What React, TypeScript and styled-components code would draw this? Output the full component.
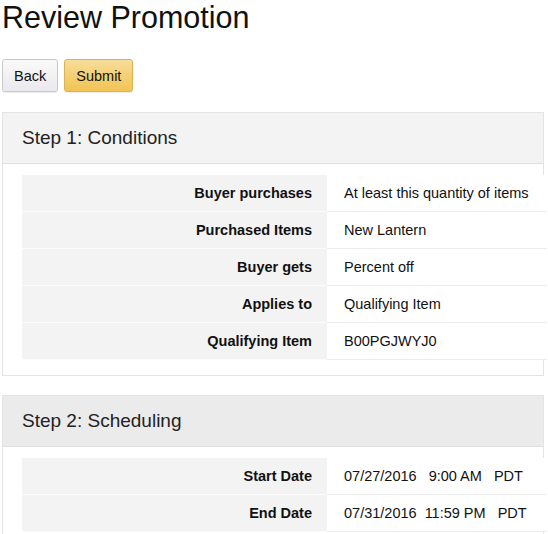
import React from "react";
import styled, { createGlobalStyle } from "styled-components";

const Global = createGlobalStyle`
  html, body { margin: 0; padding: 0; background: #ffffff; }
  body { font-family: Arial, "Liberation Sans", sans-serif; color: #111; }
`;

const Page = styled.div`
  width: 548px;
  height: 534px;
  overflow: hidden;
  padding-left: 2px;
  box-sizing: border-box;
`;

const Title = styled.h1`
  margin: 0;
  font-size: 30.5px;
  line-height: 34px;
  font-weight: normal;
  color: #111;
`;

const ButtonRow = styled.div`
  display: flex;
  gap: 6px;
  margin-top: 25px;
`;

const Button = styled.button<{ $primary?: boolean }>`
  height: 33px;
  padding: 0 11px;
  font-family: Arial, "Liberation Sans", sans-serif;
  font-size: 14.5px;
  color: #111;
  border-radius: 3px;
  border: 1px solid ${(p) => (p.$primary ? "#d9b25a" : "#c9c9c9")};
  background: ${(p) =>
    p.$primary
      ? "linear-gradient(to bottom, #f8dd99, #f1c352)"
      : "linear-gradient(to bottom, #fafafa, #e9e9ee)"};
  box-shadow: 0 1px 1px rgba(0, 0, 0, 0.08);
`;

const Section = styled.section<{ $top: number }>`
  margin-top: ${(p) => p.$top}px;
  width: 542px;
  border: 1px solid #e4e4e4;
  box-sizing: border-box;
  padding-bottom: 15px;
`;

const SectionHeader = styled.div<{ $shade: string }>`
  height: 50px;
  display: flex;
  align-items: center;
  padding-left: 19px;
  background: ${(p) => p.$shade};
  border-bottom: 1px solid #dedede;
  font-size: 19px;
  color: #222;
`;

const Table = styled.div`
  margin: 11px 0 0 19px;
  display: grid;
  grid-template-columns: 305px 1fr;
  margin-right: -4px;
`;

const Label = styled.div`
  height: 37px;
  display: flex;
  align-items: center;
  justify-content: flex-end;
  padding-right: 15px;
  background: #f3f3f3;
  border-bottom: 1px solid #fbfbfb;
  box-sizing: border-box;
  font-size: 14.5px;
  font-weight: bold;
  color: #111;
`;

const Value = styled.div`
  height: 37px;
  display: flex;
  align-items: center;
  padding-left: 17px;
  background: #ffffff;
  border-bottom: 1px solid #ececec;
  box-sizing: border-box;
  font-size: 14.5px;
  color: #111;
  white-space: pre;
`;

const step1: [string, string][] = [
  ["Buyer purchases", "At least this quantity of items"],
  ["Purchased Items", "New Lantern"],
  ["Buyer gets", "Percent off"],
  ["Applies to", "Qualifying Item"],
  ["Qualifying Item", "B00PGJWYJ0"],
];

const step2: [string, string][] = [
  ["Start Date", "07/27/2016   9:00 AM   PDT"],
  ["End Date", "07/31/2016  11:59 PM   PDT"],
];

function Rows({ rows }: { rows: [string, string][] }) {
  return (
    <Table>
      {rows.map(([l, v]) => (
        <React.Fragment key={l}>
          <Label>{l}</Label>
          <Value>{v}</Value>
        </React.Fragment>
      ))}
    </Table>
  );
}

export default function App() {
  return (
    <>
      <Global />
      <Page>
        <Title>Review Promotion</Title>
        <ButtonRow>
          <Button>Back</Button>
          <Button $primary>Submit</Button>
        </ButtonRow>
        <Section $top={20}>
          <SectionHeader $shade="#f3f3f3">Step 1: Conditions</SectionHeader>
          <Rows rows={step1} />
        </Section>
        <Section $top={19}>
          <SectionHeader $shade="#ebebeb">Step 2: Scheduling</SectionHeader>
          <Rows rows={step2} />
        </Section>
      </Page>
    </>
  );
}
